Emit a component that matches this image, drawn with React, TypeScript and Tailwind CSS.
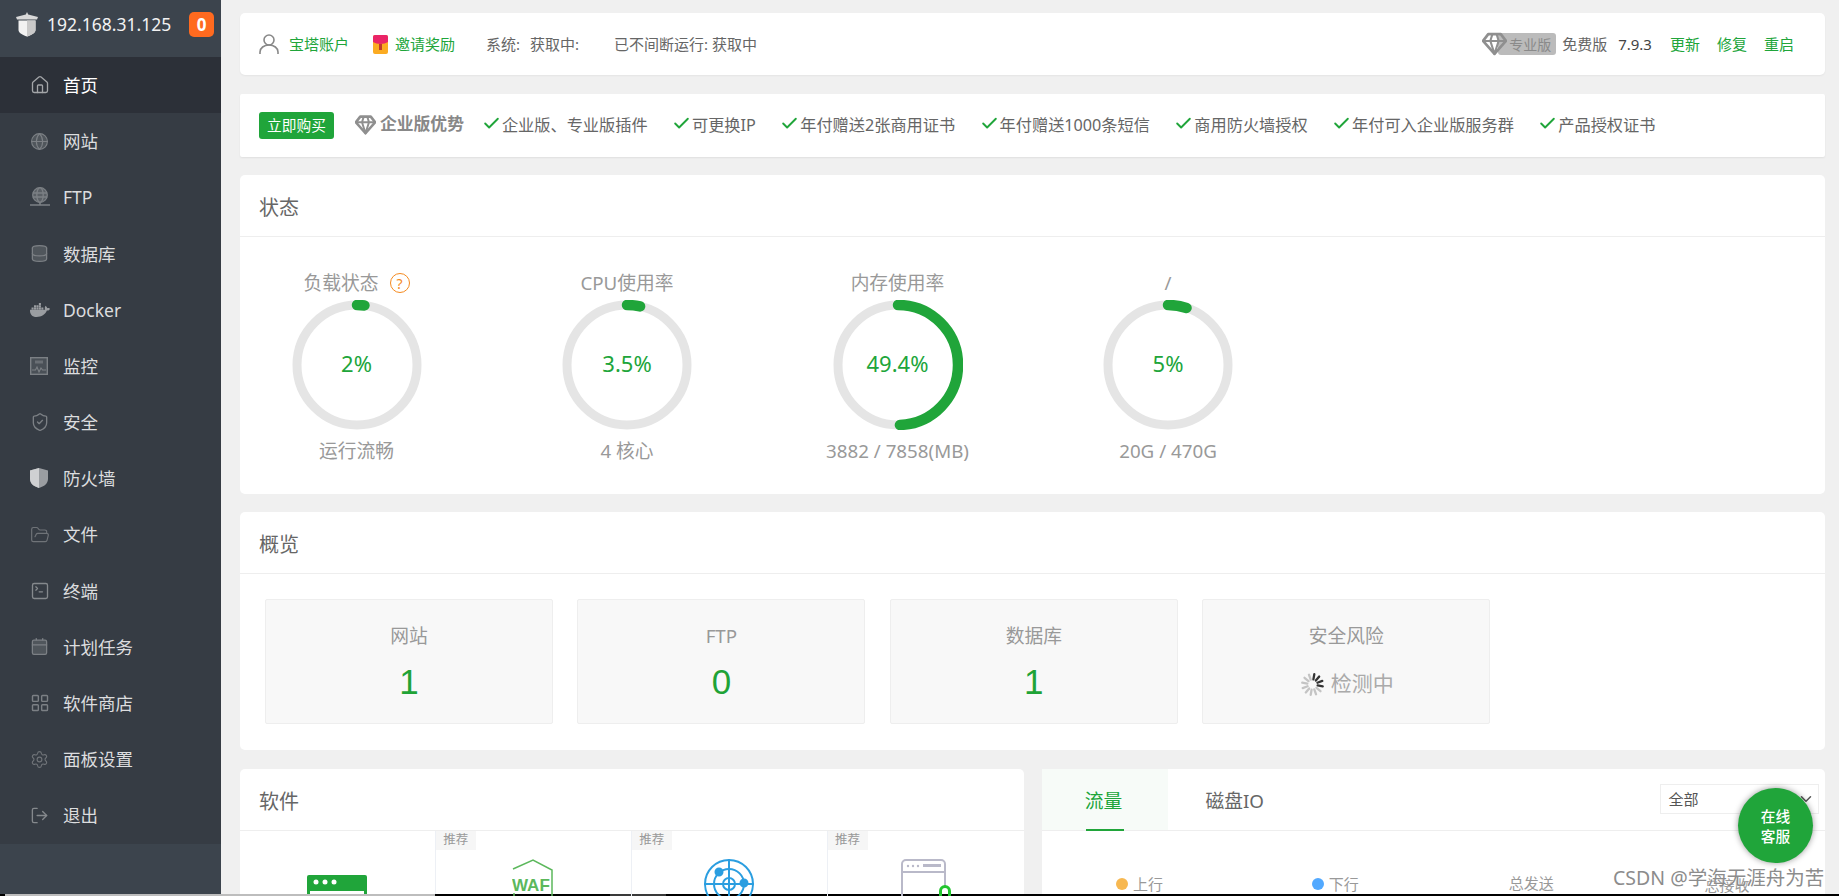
import { House, Globe, Database, ShieldCheck, FolderOpen, SquareTerminal, Calendar, LayoutGrid, Settings, LogOut, ChevronDown, Check } from 'lucide-react';
import { FaDocker } from 'react-icons/fa';

const GREEN = '#20a53a';

function Logo() {
  return (
    <svg width="24" height="25" viewBox="0 0 24 25" className="shrink-0">
      <path d="M12 0l1.2 2.4L23 5l-1 2.4H2L1 5l9.800-2.600z" fill="#d9d9d9" />
      <path d="M3.500 8.500h17V18c0 3-4 5-8.500 6.500C7.500 23 3.500 21 3.500 18z" fill="#f2f2f2" />
      <path d="M12 8.500h8.500V18c0 3-4 5-8.500 6.500z" fill="#c9c9c9" />
    </svg>
  );
}

function FtpIcon() {
  return (
    <svg width="20" height="20" viewBox="0 0 20 20" fill="none" stroke="#7c8085" strokeWidth="1.300">
      <circle cx="10" cy="8" r="7.300" fill="#5b6066" />
      <ellipse cx="10" cy="8" rx="3.200" ry="7.300" />
      <path d="M2.800 6h14.400M2.800 10h14.400" />
      <path d="M0 18h20M10 15v3" strokeWidth="1.600" />
    </svg>
  );
}

function MonitorIcon() {
  return (
    <svg width="18" height="18" viewBox="0 0 18 18" fill="none" stroke="#7c8085" strokeWidth="1.400">
      <rect x="0.700" y="0.700" width="16.600" height="16.600" fill="#4a5057" />
      <rect x="5" y="3.500" width="8" height="3" fill="#6a6f75" stroke="none" />
      <path d="M2 13h3.500l1.500-3 2 5 2-4 1.500 2H16" strokeWidth="1.100" />
    </svg>
  );
}

function FirewallIcon() {
  return (
    <svg width="18" height="20" viewBox="0 0 18 20">
      <path d="M9 0l9 2.500V11c0 4.500-4 7.500-9 9-5-1.500-9-4.500-9-9V2.500z" fill="#9a9da1" />
      <path d="M9 0v20c-5-1.500-9-4.500-9-9V2.500z" fill="#cfd0d2" />
    </svg>
  );
}

const menu = [
  { label: '首页', icon: <House size={20} strokeWidth={1.6} color="#a3a5a8" />, active: true },
  { label: '网站', icon: <Globe size={19} strokeWidth={1.4} color="#7c8085" fill="#50565c" /> },
  { label: 'FTP', icon: <FtpIcon /> },
  { label: '数据库', icon: <Database size={19} strokeWidth={1.6} color="#7c8085" fill="#50565c" /> },
  { label: 'Docker', icon: <FaDocker size={20} color="#9a9da1" /> },
  { label: '监控', icon: <MonitorIcon /> },
  { label: '安全', icon: <ShieldCheck size={20} strokeWidth={1.6} color="#7c8085" /> },
  { label: '防火墙', icon: <FirewallIcon /> },
  { label: '文件', icon: <FolderOpen size={20} strokeWidth={1.4} color="#6f7378" /> },
  { label: '终端', icon: <SquareTerminal size={20} strokeWidth={1.6} color="#85898d" /> },
  { label: '计划任务', icon: <Calendar size={19} strokeWidth={1.6} color="#7c8085" fill="#50565c" /> },
  { label: '软件商店', icon: <LayoutGrid size={20} strokeWidth={1.7} color="#7c8085" /> },
  { label: '面板设置', icon: <Settings size={19} strokeWidth={1.4} color="#6f7378" /> },
  { label: '退出', icon: <LogOut size={19} strokeWidth={1.7} color="#85898d" /> },
];

const perks = ['企业版、专业版插件', '可更换IP', '年付赠送2张商用证书', '年付赠送1000条短信', '商用防火墙授权', '年付可入企业版服务群', '产品授权证书'];

const gauges = [
  { title: '负载状态', value: 2, text: '2%', sub: '运行流畅', help: true },
  { title: 'CPU使用率', value: 3.5, text: '3.5%', sub: '4 核心' },
  { title: '内存使用率', value: 49.4, text: '49.4%', sub: '3882 / 7858(MB)' },
  { title: '/', value: 5, text: '5%', sub: '20G / 470G' },
];

function Ring({ value, text }: { value: number; text: string }) {
  const r = 60;
  const c = 2 * Math.PI * r;
  return (
    <div className="relative h-[130px] w-[130px]">
      <svg width="130" height="130" viewBox="0 0 130 130">
        <circle cx="65" cy="65" r={r} fill="none" stroke="#e5e5e5" strokeWidth="9" />
        <circle
          cx="65"
          cy="65"
          r={r}
          fill="none"
          stroke={GREEN}
          strokeWidth="10.500"
          strokeLinecap="round"
          strokeDasharray={`${(c * value) / 100} ${c}`}
          transform="rotate(-90 65 65)"
        />
      </svg>
      <div className="absolute inset-0 flex items-center justify-center pb-[3px] text-[22px] text-[#20a53a]">{text}</div>
    </div>
  );
}

function Diamond({ size, color, width = 2 }: { size: number; color: string; width?: number }) {
  return (
    <svg width={size} height={size} viewBox="0 0 24 24" className="shrink-0" fill="none" stroke={color} strokeWidth={width} strokeLinejoin="round">
      <path d="M6 3h12l5 6.500L12 22 1 9.500z" />
      <path d="M1 9.500h22M8 9.500L12 22l4-12.500M8 9.500L10 3M16 9.500L14 3" strokeWidth={width * 0.75} />
    </svg>
  );
}

function Spinner() {
  return (
    <svg width="25" height="25" viewBox="0 0 24 24" strokeWidth="2.200" strokeLinecap="round">
      {Array.from({ length: 12 }).map((_, i) => (
        <line
          key={i}
          x1="12"
          y1="2"
          x2="12"
          y2="7"
          stroke={i <= 3 ? '#333' : '#c4c4c4'}
          transform={`rotate(${i * 30 + 10} 12 12)`}
        />
      ))}
    </svg>
  );
}

function Panel({ title, children, className }: { title: string; children: React.ReactNode; className?: string }) {
  return (
    <section className={`rounded-[5px] bg-white ${className ?? ''}`}>
      <div className="flex h-[62px] items-center border-b border-[#eee] pl-[19px] pt-[4px] text-[20px] text-[#666]">{title}</div>
      {children}
    </section>
  );
}

function OverviewBox({ title, value, loading }: { title: string; value?: string; loading?: boolean }) {
  return (
    <div className="flex h-[125px] w-[288px] flex-col items-center rounded-[2px] border border-[#eee] bg-[#f8f8f8] pt-[22px]">
      <div className="h-[28px] text-[18.750px] leading-[28px] text-[#999]">{title}</div>
      {loading ? (
        <div className="mt-[21px] flex h-[26px] items-center gap-[6px] pl-[1px] text-[21px] text-[#aaa]">
          <Spinner />
          检测中
        </div>
      ) : (
        <div className="mt-[14px] h-[36px] font-['Liberation_Sans',sans-serif] text-[35px] leading-[36px] text-[#1fa336]">{value}</div>
      )}
    </div>
  );
}

const Badge = () => (
  <span className="absolute left-0 top-0 flex h-[19px] w-[40px] items-center justify-center bg-[#f6f6f6] text-[12.500px] text-[#999]">推荐</span>
);

export default function App() {
  return (
    <div className="relative flex h-screen w-full flex-col overflow-hidden bg-[#f0f0f0] font-['Noto_Sans','Noto_Sans_CJK_SC',sans-serif]">
      <div className="flex min-h-0 flex-1">
        <aside className="flex w-[221px] shrink-0 flex-col bg-[#3c444d]">
          <div className="flex h-[57px] items-center pb-[8px] pl-[15px] text-white">
            <Logo />
            <span className="ml-[8px] text-[17.500px] text-[#f2f2f2]">192.168.31.125</span>
            <span className="ml-[18px] flex h-[25px] w-[25px] items-center justify-center rounded-[5px] bg-[#ff6a1f] text-[17px] font-bold">0</span>
          </div>
          <nav className="bg-[#363c44]">
            {menu.map(m => (
              <div key={m.label} className={`flex h-[56.200px] items-center pl-[30px] text-[17.500px] ${m.active ? 'bg-[#2c3038] text-white' : 'text-[#dcdddf]'}`}>
                <span className="flex w-[33px] justify-start">{m.icon}</span>
                {m.label}
              </div>
            ))}
          </nav>
        </aside>

        <main className="flex min-w-0 flex-1 flex-col gap-[18px] pb-0 pl-[19px] pr-[14px] pt-[13px]">
          <div className="flex h-[62px] shrink-0 items-center rounded-[5px] bg-white pl-[19px] text-[15px] text-[#666] shadow-[0_1px_2px_rgba(0,0,0,0.05)]">
            <svg width="20" height="20" viewBox="0 0 20 20" fill="none" stroke="#888" strokeWidth="1.600">
              <circle cx="10" cy="6" r="5" />
              <path d="M1 20v-2c0-4 4-7 9-7s9 3 9 7v2" />
            </svg>
            <span className="ml-[10px] text-[#20a53a]">宝塔账户</span>
            <svg width="15" height="19" viewBox="0 0 15 19" className="ml-[24px]">
              <rect width="15" height="19" rx="2" fill="#fbab22" />
              <path d="M0 2a2 2 0 012-2h11a2 2 0 012 2v5c-4 2.500-11 2.500-15 0z" fill="#ea2467" />
              <rect x="6" y="9" width="3" height="6" fill="#c0392b" />
            </svg>
            <span className="ml-[7px] text-[#20a53a]">邀请奖励</span>
            <span className="ml-[31px]">系统:</span>
            <span className="ml-[10px]">获取中:</span>
            <span className="ml-[35px]">已不间断运行: 获取中</span>
            <div className="ml-auto flex items-center pr-[31px]">
              <div className="relative flex h-[22px] w-[58px] items-center justify-end rounded-[3px] bg-[#bbb] pr-[5px] text-[14px] text-[#8a8a8a]">
                专业版
                <span className="absolute left-[-16px] top-[-2px]">
                  <Diamond size={25} color="#8f8f8f" width={2.6} />
                </span>
              </div>
              <span className="ml-[6px]">免费版</span>
              <span className="ml-[11px] text-[#444]">7.9.3</span>
              <span className="ml-[18px] text-[#20a53a]">更新</span>
              <span className="ml-[17px] text-[#20a53a]">修复</span>
              <span className="ml-[17px] text-[#20a53a]">重启</span>
            </div>
          </div>

          <div className="mt-[1px] flex h-[63px] shrink-0 items-center rounded-[2px] bg-white pl-[19px] shadow-[0_1px_2px_rgba(0,0,0,0.07)]">
            <span className="flex h-[27px] w-[75px] items-center justify-center rounded-[3px] bg-[#20a53a] text-[14.700px] text-white">立即购买</span>
            <span className="mb-[3px] ml-[21px]">
              <Diamond size={21} color="#8f8f8f" width={3} />
            </span>
            <span className="mb-[3px] ml-[4px] text-[16.800px] font-bold text-[#888]">企业版优势</span>
            <div className="ml-[18px] flex items-center gap-[24.400px]">
              {perks.map(p => (
                <span key={p} className="flex items-center text-[16.200px] text-[#666]">
                  <Check size={19} strokeWidth={2.4} color="#20a53a" className="mb-[3px] mr-[1px]" />
                  {p}
                </span>
              ))}
            </div>
          </div>

          <Panel title="状态" className="h-[319px] shrink-0">
            <div className="flex gap-[70.500px] pl-[16.500px] pt-[33px]">
              {gauges.map(g => (
                <div key={g.title} className="flex w-[200px] flex-col items-center">
                  <div className="flex h-[26px] items-center gap-[11px] text-[18.750px] text-[#999]">
                    {g.title}
                    {g.help && (
                      <span className="flex h-[20px] w-[20px] items-center justify-center rounded-full border border-[#f58a1f] text-[14px] text-[#f58a1f]">?</span>
                    )}
                  </div>
                  <div className="mt-[4px]">
                    <Ring value={g.value} text={g.text} />
                  </div>
                  <div className="mt-[8px] h-[26px] text-[18.750px] leading-[26px] text-[#999]">{g.sub}</div>
                </div>
              ))}
            </div>
          </Panel>

          <Panel title="概览" className="h-[238px] shrink-0">
            <div className="flex gap-[24.400px] pl-[25px] pt-[25px]">
              <OverviewBox title="网站" value="1" />
              <OverviewBox title="FTP" value="0" />
              <OverviewBox title="数据库" value="1" />
              <OverviewBox title="安全风险" loading />
            </div>
          </Panel>

          <div className="mt-[1px] grid min-h-0 flex-1 grid-cols-2 gap-[18px]">
            <Panel title="软件" className="min-h-[200px]">
              <div className="grid grid-cols-4">
                <div className="flex h-[180px] justify-center border-r border-[#edf0f5] pt-[44px]">
                  <svg width="60" height="60" viewBox="0 0 60 60">
                    <rect width="60" height="60" rx="2" fill="#20a53a" />
                    <circle cx="9" cy="7" r="2.500" fill="#fff" />
                    <circle cx="18" cy="7" r="2.500" fill="#fff" />
                    <circle cx="27" cy="7" r="2.500" fill="#fff" />
                    <rect x="3" y="16" width="54" height="41" fill="#fff" />
                  </svg>
                </div>
                <div className="relative flex h-[180px] justify-center border-r border-[#edf0f5] pt-[28px]">
                  <Badge />
                  <svg width="42" height="60" viewBox="0 0 42 60" fill="none" stroke="#5cb85c" strokeWidth="1.500">
                    <path d="M1 10L21 1l19 10v40L21 59 2 51V34" />
                    <text x="0" y="32" stroke="none" fill="#5cb85c" fontSize="17" fontWeight="700" fontFamily="Liberation Sans">WAF</text>
                  </svg>
                </div>
                <div className="relative flex h-[180px] justify-center border-r border-[#edf0f5] pt-[28px]">
                  <Badge />
                  <svg width="50" height="50" viewBox="0 0 50 50" fill="none" stroke="#2b9ee0" strokeWidth="2">
                    <circle cx="25" cy="25" r="24" />
                    <circle cx="25" cy="25" r="15" />
                    <circle cx="25" cy="25" r="6" />
                    <path d="M25 0v50M0 25h50" />
                    <circle cx="15" cy="13" r="3.500" fill="#2b9ee0" />
                    <circle cx="40" cy="24" r="3.500" fill="#2b9ee0" />
                  </svg>
                </div>
                <div className="relative flex h-[180px] justify-center pl-[10px] pt-[28px]">
                  <Badge />
                  <svg width="60" height="50" viewBox="0 0 60 50" fill="none">
                    <path d="M1 50V5a4 4 0 014-4h35a4 4 0 014 4v22" stroke="#b9b9c9" strokeWidth="2" />
                    <path d="M1 13h43" stroke="#b9b9c9" strokeWidth="2" />
                    <circle cx="7" cy="7" r="1.200" fill="#b9b9c9" />
                    <circle cx="12" cy="7" r="1.200" fill="#b9b9c9" />
                    <circle cx="17" cy="7" r="1.200" fill="#b9b9c9" />
                    <rect x="22" y="5" width="18" height="3" fill="#b9b9c9" />
                    <path d="M39.500 38v-6a4.500 4.500 0 019 0v6" stroke="#22c52e" strokeWidth="3" />
                  </svg>
                </div>
              </div>
            </Panel>

            <section className="min-h-[200px] rounded-[5px] bg-white">
              <div className="relative flex h-[62px] items-stretch border-b border-[#eee]">
                <div className="relative flex w-[126px] items-center justify-center bg-[#f7fbf8] pr-[2px] pt-[3px] text-[18.750px] text-[#20a53a]">
                  流量
                  <span className="absolute bottom-[-1px] left-[44px] h-[2px] w-[38px] bg-[#20a53a]" />
                </div>
                <div className="ml-[38px] flex items-center pt-[3px] text-[18.750px] text-[#666]">磁盘IO</div>
                <div className="absolute left-[618px] top-[15px] flex h-[30px] w-[159px] items-center justify-between border border-[#eee] pl-[8px] pr-[3px] text-[15px] text-[#555]">
                  全部
                  <ChevronDown size={18} color="#555" />
                </div>
              </div>
              <div className="grid grid-cols-4 pt-[41px] text-[15px] text-[#999]">
                <div className="flex items-center justify-center gap-[5px]">
                  <span className="h-[12px] w-[12px] rounded-full bg-[#f7b851]" />
                  上行
                </div>
                <div className="flex items-center justify-center gap-[5px]">
                  <span className="h-[12px] w-[12px] rounded-full bg-[#52a9ff]" />
                  下行
                </div>
                <div className="text-center">总发送</div>
                <div className="pt-[2px] text-center">总接收</div>
              </div>
            </section>
          </div>
        </main>
      </div>

      <div className="flex h-[2px] shrink-0 bg-black">
        <span className="ml-[5px] w-[430px] bg-[#bdbdbd]" />
        <span className="ml-[175px] w-[56px] bg-[#3a3a3a]" />
      </div>

      <div className="absolute left-[1738px] top-[788px] flex h-[75px] w-[75px] flex-col items-center justify-center rounded-full bg-[#20a53a] text-[14.700px] font-medium leading-[20px] text-white shadow-[0_0_6px_rgba(0,0,0,0.4)]">
        <span>在线</span>
        <span>客服</span>
      </div>
      <div className="absolute left-[1613px] top-[864px] whitespace-nowrap text-[19.500px] leading-[28px] text-[#8c8c8c] [text-shadow:0_0_2px_#fff]">CSDN @学海无涯舟为苦</div>
    </div>
  );
}
